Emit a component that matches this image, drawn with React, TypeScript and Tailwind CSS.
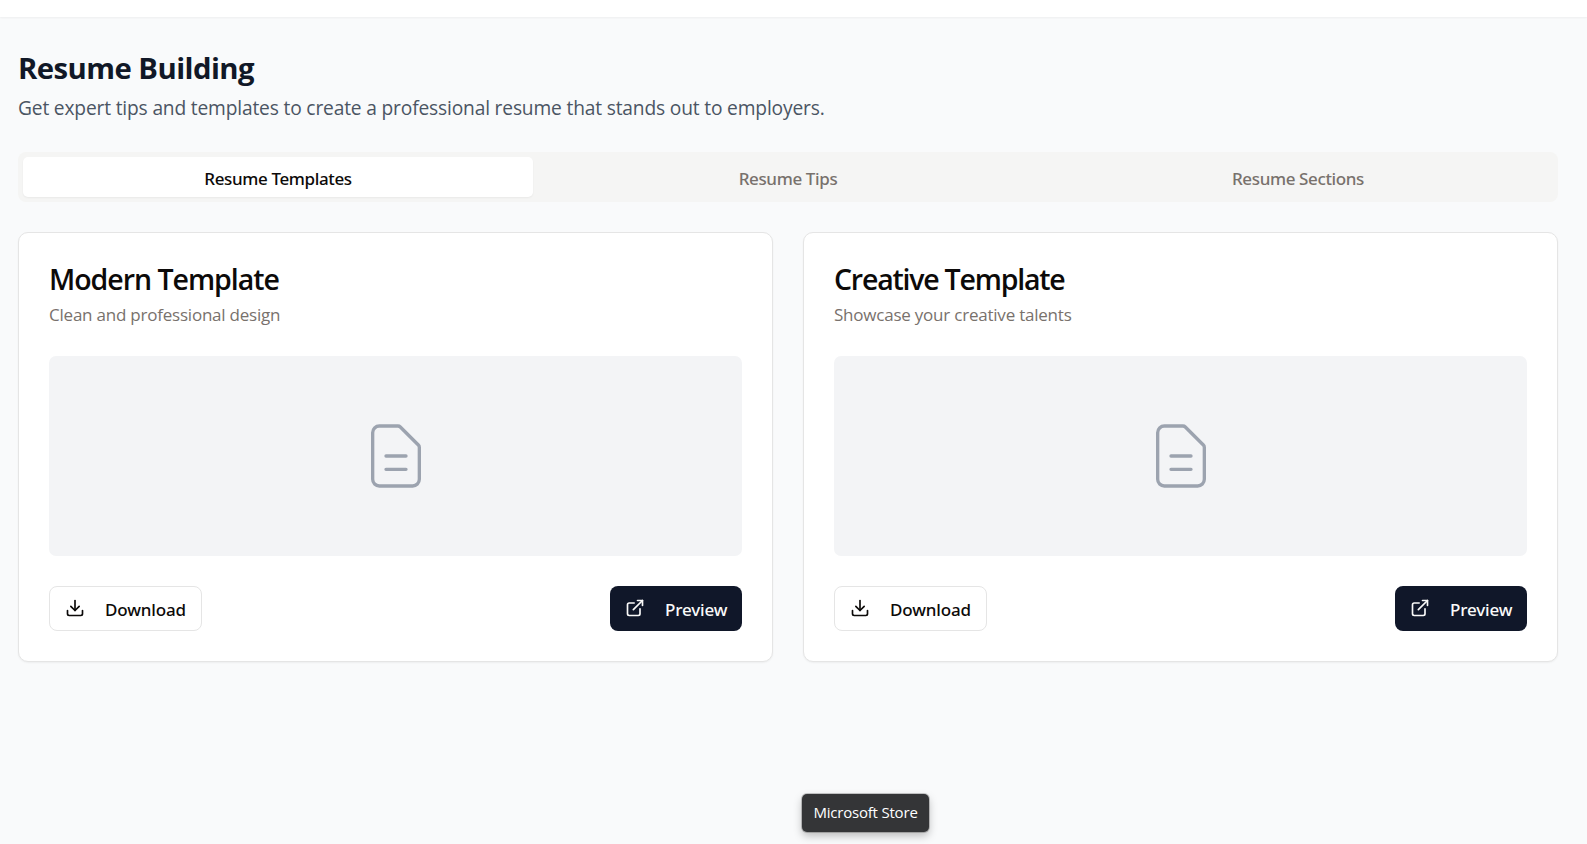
import React from "react";
import { Download, ExternalLink } from "lucide-react";

const tabs = [
  { label: "Resume Templates", active: true },
  { label: "Resume Tips", active: false },
  { label: "Resume Sections", active: false },
];

const templates = [
  { title: "Modern Template", description: "Clean and professional design", tracking: "tracking-[-1.03px]" },
  { title: "Creative Template", description: "Showcase your creative talents", tracking: "tracking-[-1.22px]" },
];

function DocumentIcon() {
  return (
    <svg className="size-20 text-[#9ca3af]" viewBox="0 0 24 24" fill="none" stroke="currentColor" strokeWidth="1" strokeLinecap="round" strokeLinejoin="round">
      <path d="M9 12h6m-6 4h6m2 5H7a2 2 0 01-2-2V5a2 2 0 012-2h5.586a1 1 0 01.707.293l5.414 5.414a1 1 0 01.293.707V19a2 2 0 01-2 2z" />
    </svg>
  );
}

function TemplateCard({ title, description, tracking }: { title: string; description: string; tracking: string }) {
  return (
    <article className="h-[430px] rounded-[10px] border border-[#e5e5e5] bg-white px-[30px] shadow-[0_1px_2px_rgba(0,0,0,0.05)]">
      <h2 className={`mt-[31px] h-[30px] whitespace-nowrap text-[28.5px] font-semibold leading-[30px] text-[#0c0a09] ${tracking}`}>{title}</h2>
      <p className="mt-[8px] h-[25px] whitespace-nowrap text-[17px] leading-[25px] tracking-[-0.22px] text-[#78716c]">{description}</p>
      <div className="mt-[29px] flex h-[200px] items-center justify-center rounded-[7px] bg-[#f3f4f6]">
        <DocumentIcon />
      </div>
      <div className="mt-[30px] flex justify-between">
        <button className="flex h-[45px] w-[153px] items-center rounded-[8px] border border-[#e5e5e5] bg-white pl-[15px] font-['Noto_Sans',sans-serif] text-[17px] font-medium tracking-[-0.15px] text-[#0c0a09]">
          <Download size={20} className="mb-[2px]" />
          <span className="ml-5 pt-[2px]">Download</span>
        </button>
        <button className="flex h-[45px] w-[132px] items-center rounded-[8px] bg-[#101729] pl-[15px] font-['Noto_Sans',sans-serif] text-[17px] font-medium tracking-[-0.15px] text-[#fafaf9]">
          <ExternalLink size={20} className="mb-[2px]" />
          <span className="ml-5 pt-[2px]">Preview</span>
        </button>
      </div>
    </article>
  );
}

export default function App() {
  return (
    <div className="relative h-[844px] overflow-hidden bg-[#f9fafb] font-['Open_Sans','Noto_Sans',sans-serif]">
      <header className="h-[17px] bg-white shadow-[0_1px_2px_rgba(0,0,0,0.05)]" />
      <main className="ml-[18px] w-[1540px] pt-[29px]">
        <h1 className="h-[45px] whitespace-nowrap text-[29.3px] font-bold leading-[45px] tracking-[-0.55px] text-[#111827]">Resume Building</h1>
        <p className="mt-[2px] h-[30px] whitespace-nowrap text-[19.2px] leading-[30px] tracking-[-0.17px] text-[#4b5563]">
          Get expert tips and templates to create a professional resume that stands out to employers.
        </p>
        <div className="mt-[29px] grid h-[50px] grid-cols-3 rounded-[8px] bg-[#f5f5f4] p-[5px]">
          {tabs.map((tab) => (
            <button
              key={tab.label}
              className={
                tab.active
                  ? "rounded-[5px] bg-white pt-[3px] font-['Noto_Sans',sans-serif] text-[17px] font-medium tracking-[-0.37px] text-[#0c0a09] shadow-[0_1px_2px_rgba(0,0,0,0.05)]"
                  : "rounded-[5px] pt-[3px] font-['Noto_Sans',sans-serif] text-[17px] font-medium tracking-[-0.37px] text-[#78716c]"
              }
            >
              {tab.label}
            </button>
          ))}
        </div>
        <section className="mt-[30px] grid grid-cols-2 gap-[30px]">
          {templates.map((template) => (
            <TemplateCard key={template.title} {...template} />
          ))}
        </section>
      </main>
      <div className="absolute left-[802px] top-[794px] flex h-[38px] w-[127px] items-center justify-center whitespace-nowrap rounded-[5px] bg-[#343537] pb-[2px] text-[15px] tracking-[-0.2px] text-white shadow-[0_4px_8px_rgba(0,0,0,0.25)] ring-1 ring-black/20">
        Microsoft Store
      </div>
    </div>
  );
}
